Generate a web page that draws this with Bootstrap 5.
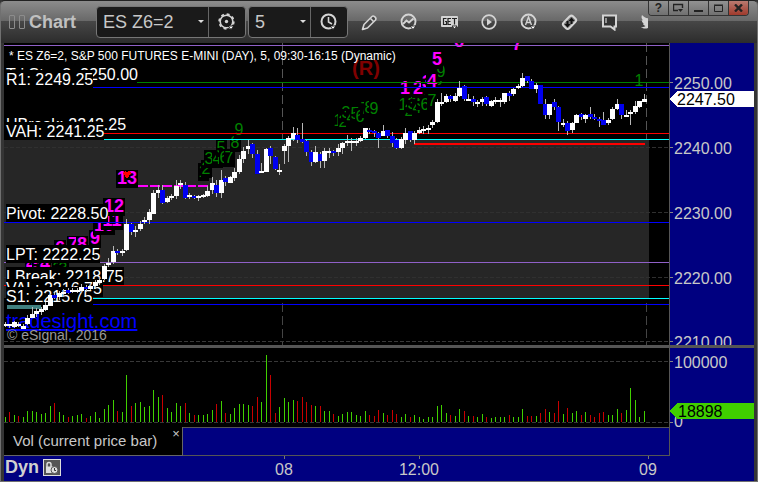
<!DOCTYPE html>
<html lang="en">
<head>
<meta charset="utf-8">
<meta name="viewport" content="width=device-width, initial-scale=1">
<title>Chart - ES Z6=2</title>
<link rel="stylesheet" href="https://cdn.jsdelivr.net/npm/bootstrap@5.3.0/dist/css/bootstrap.min.css">
<style>
body{font-family:"Liberation Sans",Arial,sans-serif;font-size:16px;line-height:20px;background:#333;color:#c8c8c8;min-height:100vh}
.frame{min-height:100vh;border:1px solid #707070;border-top-color:#222;border-radius:5px 5px 0 0;background:#353535;overflow:hidden}
.titlebar{height:42px;background:linear-gradient(#8c8c8c 0,#686868 20px,#474747 20px,#2c2c2c 100%);padding-right:8px}
.grip{width:6px;height:14px;border:1px solid #8c8c8c;border-radius:1px}
.app-name{font-size:18px;color:#c0c0c0;margin:0;line-height:20px}
.combo{height:32px;background:#1a1a1a;border:1px solid #777;border-radius:4px}
.combo select{font-size:18px;line-height:20px;color:#c8c8c8;background-color:transparent;border:0;border-right:1px solid #666;border-radius:0;padding:0 20px 0 6px;height:100%;background-image:url("data:image/svg+xml,%3Csvg xmlns='http://www.w3.org/2000/svg' viewBox='0 0 6 4'%3E%3Cpath d='M0 0h6L3 3z' fill='%23ddd'/%3E%3C/svg%3E");background-size:6px 4px;background-position:right 4px center}
.sym{width:112px!important}.intv{width:62px!important}
#interval{margin:0 1px 0 2px}
.tool{width:40px;height:32px;padding:0;border:0;background:none;color:#d4d4d4;flex:none;line-height:0}
.combo .tool{width:36px;height:30px}
.tools{overflow:hidden;flex:0 0 299px}
.winbtns{height:15px;border:1px solid #333;border-top:0;border-radius:0 0 4px 4px;overflow:hidden;align-self:flex-start}
.winbtns button{width:20px;height:14px;padding:0;border:0;border-left:1px solid #333;background:linear-gradient(#929292,#707070);line-height:12px;font-size:12px;color:#222}
.winbtns button:first-child{border-left:0;width:19px}
.winbtns .btn-shut{background:linear-gradient(#b97a70,#a03a2c)}
.work{margin:0 3px;background:#000080}
.plot{background:#000;min-width:0;min-height:0;overflow:hidden}
.axis{width:85px;border-left:1px solid #555;background:#000080;overflow:hidden}
.price{flex:302 1 0;min-height:200px}
.volume{flex:79 1 0;min-height:60px;border-top:3px solid #555}
svg{display:block}
.plot svg,.axis svg{width:100%;height:100%}
.study{height:29px}
.study-tab{width:179px;padding-left:9px;border-right:1px solid #666;border-bottom:1px solid #666;background:#000;font-size:15px}
.study-tab button{font-size:13px;line-height:10px;border:0;padding:0;background:none;color:#c8c8c8;width:12px;align-self:flex-start;margin-top:2px}
.study-rest{border:1px solid #555;border-left:0}
.study-gap{width:84px}
.timeaxis{height:22px;margin-bottom:3px}
.dyn{font-size:18px;font-weight:700;color:#d0d0d0;padding-left:1px}
.lock{width:18px;height:17px;padding:0;border:1px solid #ddd;background:#555;line-height:0;color:#ddd}
</style>
<script src="https://cdn.jsdelivr.net/npm/bootstrap@5.3.0/dist/js/bootstrap.bundle.min.js"></script>
</head>
<body>
<div class="frame d-flex flex-column">
<header class="titlebar d-flex align-items-center flex-shrink-0">
  <div class="d-flex gap-1 ps-2 me-1"><span class="grip"></span><span class="grip"></span></div>
  <h1 class="app-name fw-bold">Chart</h1>
  <div class="combo d-flex ms-auto flex-shrink-0">
    <select class="form-select sym" aria-label="Symbol"><option>ES Z6=2</option></select>
    <button class="tool d-flex align-items-center justify-content-center" aria-label="Settings"><svg width="18" height="18" viewBox="0 0 18 18" fill="none" stroke="currentColor"><circle cx="8.500" cy="8.500" r="6.300" stroke-width="1.600"/><circle cx="8.500" cy="8.500" r="7.300" stroke-width="1.800" stroke-dasharray="2.900 2.830"/><circle cx="8.500" cy="8.500" r="1.700" fill="currentColor" stroke="none"/><path d="M10 13h6l-3 3.500z" fill="#fff" stroke="#1a1a1a"/></svg></button>
  </div>
  <div class="combo d-flex flex-shrink-0" id="interval">
    <select class="form-select intv" aria-label="Interval"><option>5</option></select>
    <button class="tool d-flex align-items-center justify-content-center" aria-label="Time template"><svg width="18" height="18" viewBox="0 0 18 18" fill="none" stroke="currentColor"><circle cx="8.500" cy="8.500" r="7" stroke-width="2"/><path d="M8.500 4v5l3.500 2" stroke-width="1.600"/><path d="M10 13h6l-3 3.500z" fill="#fff" stroke="#1a1a1a"/></svg></button>
  </div>
  <nav class="tools d-flex" aria-label="Chart tools">
    <button class="tool d-flex align-items-center justify-content-center" aria-label="Draw"><svg width="17" height="17" viewBox="0 0 17 17" fill="#444" stroke="currentColor" stroke-width="1.600" stroke-linejoin="round"><path d="M1.500 15.500l1.500-5L11 2.500c1.500-1.500 5 1.500 3.500 3.500L6.500 14z"/><path d="M9.500 4.500l3 3"/><path d="M1 16l3.200-1-2.200-2.200z" fill="currentColor" stroke="none"/></svg></button>
    <button class="tool d-flex align-items-center justify-content-center" aria-label="Studies"><svg width="18" height="18" viewBox="0 0 18 18" fill="none" stroke="currentColor"><circle cx="8.500" cy="8.500" r="7" stroke-width="1.900"/><path d="M3 11l3.500-3.500 2.500 2 4.500-4" stroke-width="1.900"/><path d="M10 13h6l-3 3.500z" fill="#fff" stroke="#333"/></svg></button>
    <button class="tool d-flex align-items-center justify-content-center" aria-label="GET studies"><svg width="17" height="15" viewBox="0 0 17 15"><rect y="1" width="17" height="11" rx="1" fill="currentColor"/><path d="M5.500 3.500h-3v6h3v-3h-1.500M10 3.500H7v6h3M7 6.500h2.500M11 3.500h5M13.500 3.500v6" fill="none" stroke="#222" stroke-width="1.200"/><path d="M11 11h5l-2.500 3z" fill="#fff" stroke="#333"/></svg></button>
    <button class="tool d-flex align-items-center justify-content-center" aria-label="Playback"><svg width="16" height="16" viewBox="0 0 16 16" fill="none" stroke="currentColor"><circle cx="8" cy="8" r="6.800" stroke-width="1.700"/><path d="M6 4.500l5 3.500-5 3.500z" fill="currentColor" stroke="none"/></svg></button>
    <button class="tool d-flex align-items-center justify-content-center" aria-label="Automatic scale"><svg width="18" height="18" viewBox="0 0 18 18" fill="none" stroke="currentColor"><circle cx="8.500" cy="8.500" r="7" stroke-width="1.900"/><path d="M5.500 12l3-8 3 8M6.500 9.500h4" stroke-width="1.400"/><path d="M10 13h6l-3 3.500z" fill="#fff" stroke="#333"/></svg></button>
    <button class="tool d-flex align-items-center justify-content-center" aria-label="Symbol link"><svg width="17" height="17" viewBox="0 0 17 17"><path d="M8.500 2.500c1.500-1.300 2.500-1.200 3.500-.200l2.500 2.500c1 1 1 2-.2 3.200L8.500 14c-1.200 1.200-2.500 1.200-3.500.2L2.500 11.700c-1-1-1-2 .2-3.200z" fill="#777" stroke="currentColor" stroke-width="2"/><path d="M10.500 3.500l3 3.500h-2v3h-2V7h-2zM6.500 13.500l-3-3.500h2V7h2v3h2z" fill="#111"/></svg></button>
    <button class="tool d-flex align-items-center justify-content-center" aria-label="Notes"><svg width="17" height="17" viewBox="0 0 17 17" fill="#333" stroke="currentColor"><path d="M2 1.500h13v11h-1.500v3l-4-3H2z" stroke-width="2"/><path d="M5 4v5" stroke-width="1.200"/></svg></button>
    <button class="tool d-flex align-items-center justify-content-center" aria-label="Tweet"><svg width="16" height="14" viewBox="0 0 16 14" fill="currentColor"><path d="M1 0c2 2 4 3.200 7 3.500C7.500 0 11-1 13 1l2-.500-1 2.500c1 6-8 14-14 9 2 .400 3.500-.200 4.500-1C3 10.500 2 9.500 2 8.500h1.200C1.500 8 .700 6.500.800 5l1.200.500C.500 4 .200 2 1 0z"/></svg></button>
  </nav>
  <div class="winbtns d-flex flex-shrink-0">
    <button aria-label="Help" class="fw-bold">?</button>
    <button aria-label="Float"><svg class="mx-auto" width="11" height="10" viewBox="0 0 11 10" fill="none" stroke="currentColor"><path d="M5 7.500H.500v-6h9V5" stroke-width="1.400"/><path d="M5 6h5L7.500 9z" fill="currentColor" stroke="none"/></svg></button>
    <button aria-label="Minimize"><svg class="mx-auto" width="9" height="9"><path d="M0 6h9v2H0z" fill="currentColor"/></svg></button>
    <button aria-label="Maximize"><svg class="mx-auto" width="9" height="8"><path d="M.500 1.500h8v6h-8zM0 1h9" fill="none" stroke="currentColor"/></svg></button>
    <button aria-label="Close" class="btn-shut"><svg class="mx-auto" width="9" height="8"><path d="M1 .500l7 7M8 .500l-7 7" stroke="currentColor" stroke-width="2.400"/></svg></button>
  </div>
</header>
<main class="work d-flex flex-column flex-grow-1">
  <section class="price d-flex"><div class="plot flex-grow-1" id="pricePlot"></div><div class="axis flex-shrink-0" id="priceAxis"></div></section>
  <section class="volume d-flex"><div class="plot flex-grow-1" id="volPlot"></div><div class="axis flex-shrink-0" id="volAxis"></div></section>
  <div class="study d-flex flex-shrink-0">
    <div class="study-tab d-flex align-items-center flex-shrink-0"><span class="flex-grow-1">Vol (current price bar)</span><button aria-label="Remove study">×</button></div>
    <div class="study-rest flex-grow-1"></div><div class="study-gap flex-shrink-0"></div>
  </div>
  <footer class="timeaxis d-flex flex-shrink-0">
    <div class="d-flex align-items-center gap-1 flex-grow-1" id="timeAxis"></div>
    <div class="study-gap flex-shrink-0"></div>
  </footer>
</main>
</div>
<script>
// Each candle: colour (w = up, b = down), body top, body bottom, wick top, wick bottom.
const candles = `w324,326,322,327 w324,326,324,328 w322,327,321,328 w324,326,322,327 w326,329,324,329 w318,324,315,325 w314,318,307,318 w311,314,308,317 w309,312,307,315 w305,310,302,311
w295,306,294,306 b295,298,293,299 w293,297,291,300 w292,294,289,297 b290,293,288,294 w290,292,288,293 w290,292,288,293 w287,291,284,293 b287,289,285,292 w286,289,284,290
w282,286,280,287 w280,283,277,285 w266,279,264,280 w263,265,258,267 w251,262,246,264 b251,253,249,255 w251,253,249,256 w224,250,219,251 b224,232,223,235 w230,232,226,237
w224,229,221,231 w220,222,217,224 w212,220,209,224 w193,214,190,214 w190,193,185,198 b190,203,185,204 w198,202,196,203 w196,198,194,200 w186,196,180,199 w183,185,180,189
b185,198,182,199 w195,197,193,199 b196,198,195,199 w196,198,195,201 w195,197,194,198 w191,196,186,197 w183,190,177,194 b185,193,180,197 w180,193,170,198 b178,182,176,186
w177,183,176,183 w172,178,168,181 w159,172,155,174 w151,159,147,163 w146,149,140,154 b144,154,143,158 b154,174,150,174 w171,173,163,173 w149,172,148,172 b148,156,146,164
b157,169,156,170 w170,172,164,175 w146,151,144,164 w138,146,136,162 w133,139,127,141 b135,140,128,143 b139,142,123,143 b141,152,140,156 b152,162,150,166 w152,162,146,163
b154,161,152,168 w151,161,148,168 w151,153,148,158 b151,153,150,156 w148,152,144,156 w143,148,142,154 w141,143,135,146 w141,143,138,151 w141,143,138,146 w138,141,136,142
w128,138,128,139 b130,132,128,134 b131,133,130,137 b133,138,132,148 w131,136,125,136 b130,136,130,138 b136,143,132,147 b140,148,138,149 w139,148,137,149 w133,140,128,144
b131,140,131,142 w133,140,131,144 w130,133,127,134 w129,131,126,134 w128,130,125,134 w122,125,120,128 w102,122,99,123 w102,104,93,106 w96,102,94,103 b96,99,95,102
w96,101,93,102 w88,96,81,97 b86,99,85,101 w99,101,94,101 b99,102,96,106 w102,104,100,107 w99,102,97,106 b97,104,96,106 w101,106,100,107 w100,102,97,104
w100,102,98,107 w93,102,93,104 b93,96,91,101 w89,94,88,96 w86,88,84,89 w78,86,73,87 b76,81,76,83 b81,89,79,89 w85,89,83,93 b85,104,85,104
b104,115,99,119 w104,115,104,119 b102,107,99,110 b107,122,106,131 w123,125,119,127 b123,131,121,135 w123,130,122,133 w115,123,114,123 b114,117,113,120 w115,119,114,123
b114,117,107,119 b117,119,114,120 b119,121,117,127 b120,125,112,125 w120,123,118,125 w109,119,107,120 w104,109,99,110 b104,115,104,119 w115,117,110,117 w112,114,110,125
w106,112,101,114 w101,107,101,108 w99,102,94,102`.trim().split(/\s+/);
// Volume bars: height in thirds of a unit, g = up, r = down.
const volumes = `16g 30r 21g 18r 15g 33g 33g 30g 24g 27g 48g 57r 30g 21g 15r 18g 21g 24g 12r 18g 30g 12g 39g 51g 66g 33r 30g 141g 48r 57g 60g 45g 48g 96g 75g 81r 42g 30g 57g 48g 57r 27g 21r 21g 21g 24g 36g 54r 63g 27r 24g 42g 54g 54g 51g 48r 75r 60g 201g 141r 27r 45g 72g 60g 66g 63r 75r 60r 51r 48g 48r 33g 33g 24r 18g 24g 30g 30g 21g 18g 33g 21r 18r 36r 27g 21r 36r 24r 15g 24g 15r 21g 15g 9g 15g 15g 48g 51g 27g 21r 18g 39g 33r 18g 18r 15g 24g 15r 12g 15g 15g 15g 21r 15g 15g 39g 18r 18r 18g 27r 39r 30g 27r 63r 24g 42r 27g 33g 21r 30g 21r 15r 27r 30r 21g 21g 39g 27r 36g 102g 66g 15g 33g`.split(' ');
// Horizontal levels: y, colour, x where the line starts.
const levels = [[45,'#9060c8',0],[82,'#008000',133],[87,'#0000ff',88],[133,'#f00',99],[139,'#0ff',99],[222,'#0000ff',0],[262,'#9060c8',0],[285,'#f00',0],[298,'#0ff',88],[304,'#0000ff',88]];
// Bar counts: text, centre x, baseline y, colour, size.
const G='#008000', M='#ff00ff';
const counts = [
 ['4',31,270,M,18],['5',38,270,M,18],['4',45,270,M,18],['2',57,274,G,16],['3',63,274,G,16],
 ['6',60,254,M,18],['7',73,250,M,18],['8',82,250,M,18],['9',95,244,M,18],['10',104,231,M,18],['11',112,226,M,18],['12',114,212,M,18],['13',127,184,M,18],
 ['1',203,177,G,16],['2',206,174,G,16],['3',209,164,G,16],['4',217,164,G,16],['5',221,153,G,16],['6',224,163,G,16],['7',229,163,G,16],['8',235,148,G,16],['9',239,135,G,16],
 ['1',338,126,G,16],['2',343,127,G,16],['3',346,118,G,16],['4',351,123,G,16],['5',355,119,G,16],['6',360,122,G,16],['7',365,114,G,16],['8',369,113,G,16],['9',374,114,G,16],
 ['1',403,110,G,16],['2',409,116,G,16],['3',412,109,G,16],['4',417,113,G,16],['5',421,106,G,16],['6',425,110,G,16],['7',432,106,G,16],['8',438,85,G,16],['9',441,77,G,16],
 ['1',405,94,M,18],['2',418,94,M,18],['3',427,88,M,18],['4',432,87,M,18],['5',437,65,M,18],['6',459,47,M,18],['7',517,50,M,18],['(R)',366,75,'#800000',20],['1',639,86,G,16]];
// Level captions: text, baseline y, box width.
const captions = [['Tri Star 2: 2250.00',80,131],['R1: 2249.25',85,87],['UBreak: 2242.25',130,119],['VAH: 2241.25',137,98],['Pivot: 2228.50',219,102],['LPT: 2222.25',260,94],['LBreak: 2218.75',282,118],['VAL: 2216.75',294,97],['S1: 2215.75',302,87]];

const W=665, H=302, VH=79;
const line=(x1,y1,x2,y2,c,extra='')=>`<line x1="${x1}" y1="${y1}" x2="${x2}" y2="${y2}" stroke="${c}" ${extra}/>`;
const rect=(x,y,w,h,c)=>`<rect x="${x}" y="${y}" width="${w}" height="${h}" fill="${c}"/>`;
const text=(x,y,t,c,size=16,extra='')=>`<text x="${x}" y="${y}" fill="${c}" font-size="${size}" ${extra}>${t}</text>`;
const put=(id,body)=>{document.getElementById(id).innerHTML=`<svg shape-rendering="crispEdges" role="img">${body}</svg>`};

function draw(){
  const p=document.getElementById('pricePlot'), v=document.getElementById('volPlot');
  const kx=p.clientWidth/W, ky=p.clientHeight/H, kv=v.clientHeight/VH;
  const X=x=>Math.round((x-4)*kx), Y=y=>Math.round((y-43)*ky);
  const right=p.clientWidth, bx=i=>Math.floor((5.3+4.5*i-4)*kx);
  let s=rect(0,Y(140),X(649),Y(298)-Y(140),'#262626');
  [147,212,277,341].forEach(y=>s+=line(0,Y(y)+.5,right,Y(y)+.5,y>300?'#383838':'#303030','stroke-dasharray="4 2"'));
  [282,646].forEach(x=>{s+=line(X(x)+.5,0,X(x)+.5,Y(140),'#555','stroke-dasharray="9 4"');s+=line(X(x)+.5,Y(303),X(x)+.5,Y(345),'#444','stroke-dasharray="9 4"')});
  counts.forEach(([t,x,y,c,z])=>{
    const w=(z>16?10:9)*t.length+2;
    if(t!=='(R)')s+=rect(X(x)-w/2,Y(y)-14,w,18,'#000');
    s+=text(X(x),Y(y),t,c,z,'text-anchor="middle"'+(z>16?' font-weight="bold"':''));
  });
  s+=`<path d="M${X(123)} ${Y(173)}l2-2 2 1 2-1 2 2-4 6z" fill="#f00"/>`;
  s+=line(X(138),Y(186),X(209),Y(186),M,'stroke-width="2" stroke-dasharray="10 2"');
  levels.forEach(([y,c,x])=>s+=line(x*kx,Y(y)+.5,right,Y(y)+.5,c));
  s+=line(X(414),Y(144),X(645),Y(144),'#f00','stroke-width="2"');
  s+=rect(X(7),Y(305),X(41)-X(7),4,'#408080');
  s+=text(X(9),Y(60),'* ES Z6=2, S&amp;P 500 FUTURES E-MINI (DAY), 5, 09:30-16:15 (Dynamic)','#fff',12);
  captions.forEach(([t,y,w])=>{s+=rect(2,Y(y)-15,w,18,'#000');s+=text(2,Y(y),t,'#fff')});
  s+=`<a href="#">${text(2,Y(328),'tradesight.com','#0000ff',20,'text-decoration="underline"')}</a>`;
  s+=text(3,Y(340),'© eSignal, 2016','#999',14);
  candles.forEach((d,i)=>{
    const [a,b,c,e]=d.slice(1).split(',').map(Number), x=bx(i);
    s+=rect(x,Y(c),1,Y(e)-Y(c),'#b8b8b8')+rect(x-2,Y(a),5,Math.max(2,Y(b)-Y(a)),d[0]==='w'?'#fff':'#0000f0');
  });
  put('pricePlot',s);

  s='';
  [[147,'2240.00'],[82,'2250.00'],[212,'2230.00'],[277,'2220.00'],[341,'2210.00']].forEach(([y,t])=>s+=line(0,Y(y)+.5,3,Y(y)+.5,'#888')+text(4,Y(y)+7,t,'#c8c8c8'));
  s+=`<path d="M0 ${Y(99)}l7-8H84v16H7z" fill="#fff"/>`+text(7,Y(99)+6,'2247.50','#000');
  put('priceAxis',s);

  const base=Math.round(74*kv), top=Math.round(13*kv);
  s=line(0,top+.5,right,top+.5,'#383838','stroke-dasharray="4 2"')+line(0,base+.5,right,base+.5,'#383838','stroke-dasharray="4 2"');
  volumes.forEach((d,i)=>{const h=Math.round(parseInt(d)/3*kv);s+=rect(bx(i),base-h,1,h,d.endsWith('g')?'#40d000':'#c80000')});
  put('volPlot',s);
  put('volAxis',line(0,top+.5,3,top+.5,'#888')+line(0,base+.5,3,base+.5,'#888')+text(4,top+7,'100000','#c8c8c8')+text(4,base+5,'0','#c8c8c8')
    +`<path d="M0 ${base-11}l7-8H84v16H7z" fill="#40d000"/>`+text(8,base-5,'18898','#000'));

  const t=document.getElementById('timeAxis');
  t.innerHTML=`<span class="dyn">Dyn</span><button class="lock" aria-label="Lock time range"><svg width="16" height="15" viewBox="0 0 16 15"><path d="M3 7V4.500a2 2 0 014 0V7" fill="none" stroke="currentColor" stroke-width="1.500"/><path d="M2 6.500h7V13H2z" fill="currentColor"/><circle cx="10.500" cy="10" r="3.500" fill="currentColor" stroke="#555"/><path d="M10.500 8v2.500H12" fill="none" stroke="#333"/></svg></button><svg class="flex-grow-1 overflow-visible" height="22" id="ticks"></svg>`;
  const k=document.getElementById('ticks'), off=k.getBoundingClientRect().left-p.getBoundingClientRect().left;
  k.innerHTML=[[284,'08'],[419,'12:00'],[648,'09']].map(([x,l])=>line(X(x)-off+.5,0,X(x)-off+.5,3,'#777')+text(X(x)-off,19,l,'#c8c8c8',16,'text-anchor="middle"')).join('');
}
draw();
window.addEventListener('resize',draw);
</script>
</body>
</html>
